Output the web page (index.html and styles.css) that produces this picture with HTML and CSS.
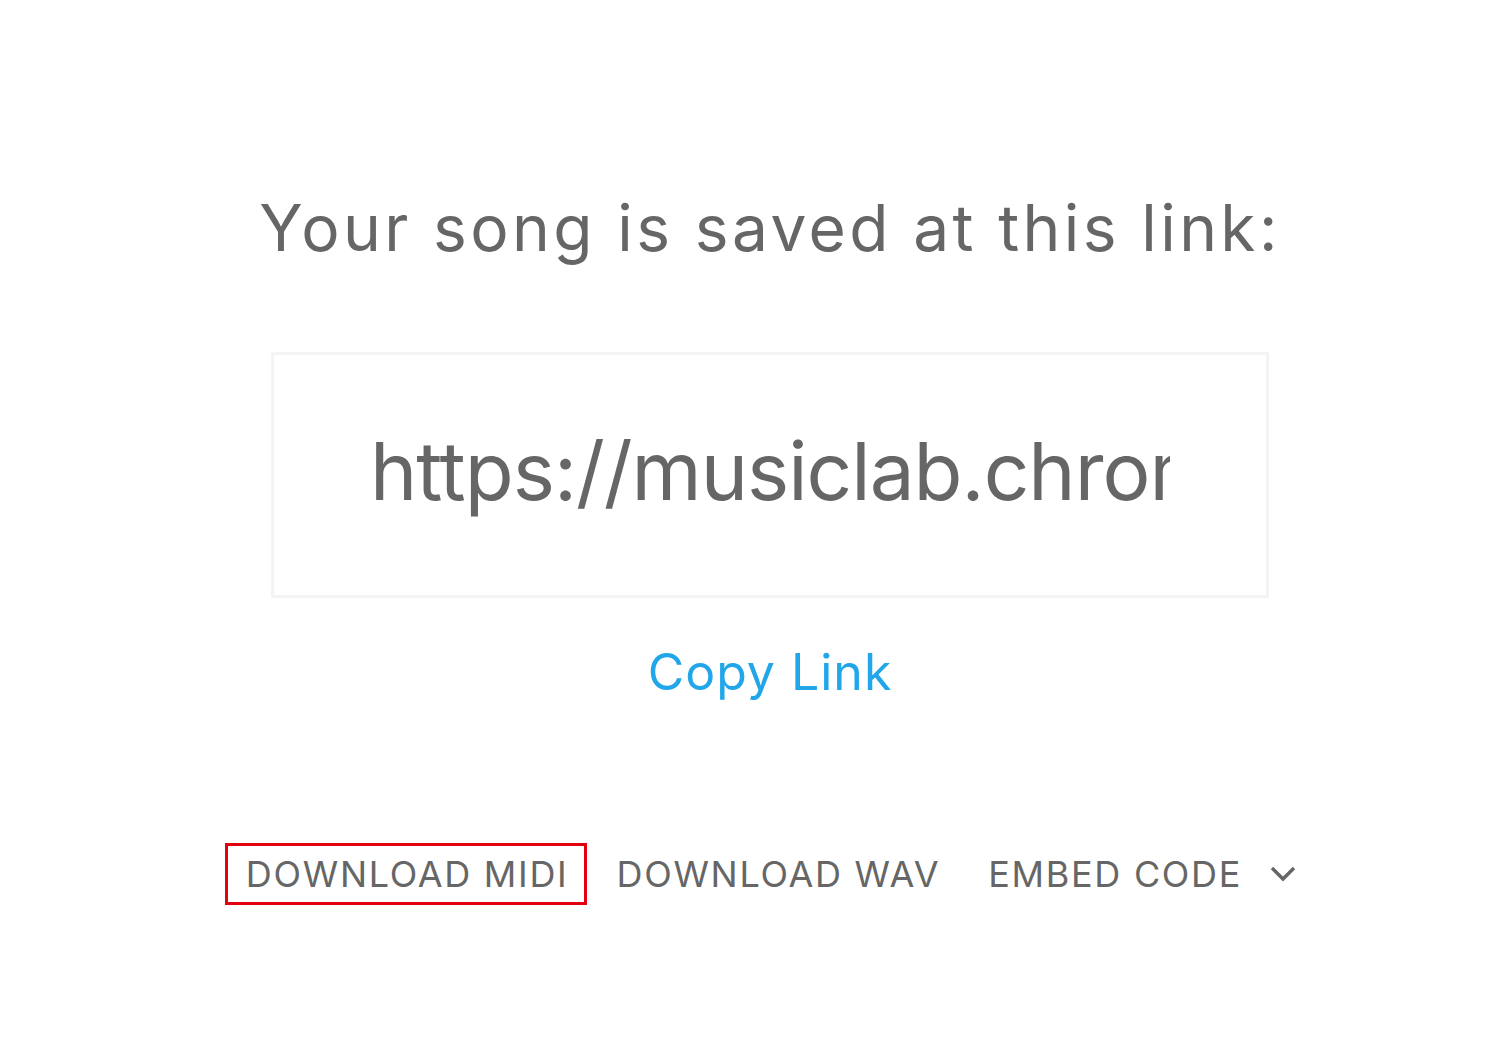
FILE: index.html
```html
<!DOCTYPE html>
<html lang="en">

<head>
    <meta charset="UTF-8">
    <meta name="viewport" content="width=device-width, initial-scale=1.0">
    <title>Song Link</title>
    <link rel="stylesheet" href="styles.css">
</head>

<body>
    <div class="page">
        <h1 class="title">Your song is saved at this link:</h1>

        <div class="link-box">
            <input class="link-input" type="text" value="https://musiclab.chromeexperiments.com/Song-Maker/song/4822683921416192" readonly>
        </div>

        <button class="copy-btn" type="button">Copy Link</button>

        <div class="actions">
            <button class="action focused" type="button">DOWNLOAD MIDI</button>
            <button class="action" type="button">DOWNLOAD WAV</button>
            <button class="action embed" type="button">
                EMBED CODE
                <svg class="chevron" width="26" height="18" viewBox="0 0 26 18">
                    <path d="M2 3 L13 14 L24 3" fill="none" stroke="#666" stroke-width="3.4"/>
                </svg>
            </button>
        </div>
    </div>
</body>

</html>
```

FILE: styles.css
```css
body {
    margin: 0;
    background-color: white;
    font-family: Inter, "Open Sans", sans-serif;
    color: #666;
}

.page {
    padding-left: 50px;
    padding-top: 190px;
    padding-bottom: 60px;
    display: flex;
    flex-direction: column;
    align-items: center;
}

.title {
    margin: 0;
    font-size: 64px;
    font-weight: 400;
    letter-spacing: 3.4px;
    line-height: 76px;
}

.link-box {
    margin-top: 86px;
    width: 992px;
    height: 240px;
    border: 3px solid #f4f4f4;
    display: flex;
    align-items: center;
    justify-content: center;
}

.link-input {
    width: 800px;
    margin-bottom: 10px;
    border: none;
    outline: none;
    padding: 0;
    font-family: Inter, "Open Sans", sans-serif;
    font-size: 80px;
    letter-spacing: -1px;
    color: #666;
    background: transparent;
}

.copy-btn {
    margin-top: 44px;
    background: none;
    border: none;
    padding: 0;
    font-family: Inter, "Open Sans", sans-serif;
    font-size: 50px;
    letter-spacing: 1px;
    color: #22a6ea;
    cursor: pointer;
}

.actions {
    margin-top: 141px;
    display: flex;
    align-items: center;
}

.action {
    background: none;
    border: 3px solid transparent;
    padding: 6px 16px 6px 18px;
    font-family: Inter, "Open Sans", sans-serif;
    font-size: 36px;
    letter-spacing: 1.7px;
    color: #666;
    cursor: pointer;
    display: flex;
    align-items: center;
}

.action.focused {
    border-color: #e3000f;
}

.action + .action {
    margin-left: 8px;
}

.chevron {
    margin-left: 28px;
}
```
